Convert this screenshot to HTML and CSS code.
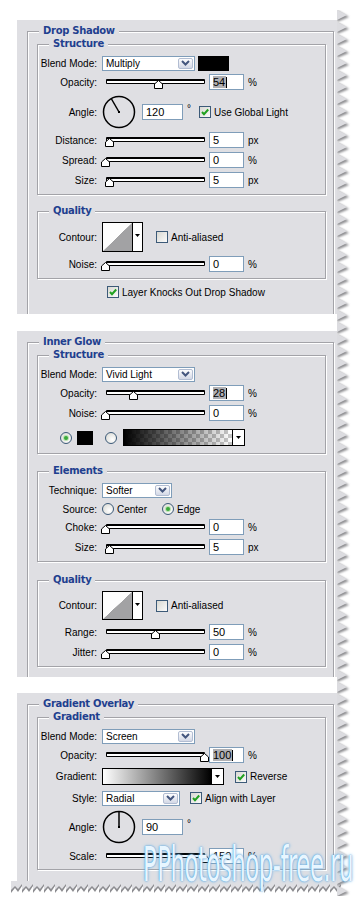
FILE: index.html
```html
<!DOCTYPE html>
<html lang="en">
<head>
    <meta charset="UTF-8">
    <meta name="viewport" content="width=device-width, initial-scale=1.0">
    <title>Layer Style</title>
    <link rel="stylesheet" href="styles.css">
</head>
<body>
<div class="sheet">
    <div class="stack">

        <!-- Drop Shadow -->
        <section class="panel">
            <div class="group outer">
                <div class="group-title">Drop Shadow</div>
                <div class="group">
                    <div class="group-title">Structure</div>
                    <div class="row">
                        <span class="lbl">Blend Mode:</span>
                        <div class="select w93"><span>Multiply</span><span class="drop"><svg width="9" height="6" viewBox="0 0 9 6"><path d="M1 1l3.5 3.5L8 1"/></svg></span></div>
                        <span class="swatch"></span>
                    </div>
                    <div class="row m3">
                        <span class="lbl">Opacity:</span>
                        <div class="slider"><svg class="thumb" style="left:54%" viewBox="0 0 9 9"><path d="M4.5 .5 8.5 4v4.5h-8V4z"/></svg></div>
                        <span class="num"><b class="sel">54</b><i class="caret"></i></span>
                        <span class="unit">%</span>
                    </div>
                    <div class="row dialrow m6">
                        <span class="lbl">Angle:</span>
                        <svg class="dial" width="34" height="34" viewBox="0 0 34 34"><circle cx="17" cy="17" r="15.5"/><path d="M17 17 9.5 4"/><rect x="16" y="16" width="2" height="2"/></svg>
                        <span class="num wide">120</span>
                        <span class="unit deg">°</span>
                        <span class="check on ml8"><svg viewBox="0 0 10 10"><path d="M2 5l2 2.2L8.2 2.5"/></svg></span>
                        <span class="txt">Use Global Light</span>
                    </div>
                    <div class="row">
                        <span class="lbl">Distance:</span>
                        <div class="slider"><svg class="thumb" style="left:4%" viewBox="0 0 9 9"><path d="M4.5 .5 8.5 4v4.5h-8V4z"/></svg></div>
                        <span class="num">5</span>
                        <span class="unit">px</span>
                    </div>
                    <div class="row">
                        <span class="lbl">Spread:</span>
                        <div class="slider"><svg class="thumb" style="left:0%" viewBox="0 0 9 9"><path d="M4.5 .5 8.5 4v4.5h-8V4z"/></svg></div>
                        <span class="num">0</span>
                        <span class="unit">%</span>
                    </div>
                    <div class="row">
                        <span class="lbl">Size:</span>
                        <div class="slider"><svg class="thumb" style="left:4%" viewBox="0 0 9 9"><path d="M4.5 .5 8.5 4v4.5h-8V4z"/></svg></div>
                        <span class="num">5</span>
                        <span class="unit">px</span>
                    </div>
                </div>

                <div class="group">
                    <div class="group-title">Quality</div>
                    <div class="row tall">
                        <span class="lbl">Contour:</span>
                        <div class="contour"><span class="curve"></span><span class="cdrop"><svg width="5" height="3" viewBox="0 0 5 3"><path d="M0 0h5L2.5 3z"/></svg></span></div>
                        <span class="check ml13"></span>
                        <span class="txt">Anti-aliased</span>
                    </div>
                    <div class="row">
                        <span class="lbl">Noise:</span>
                        <div class="slider"><svg class="thumb" style="left:0%" viewBox="0 0 9 9"><path d="M4.5 .5 8.5 4v4.5h-8V4z"/></svg></div>
                        <span class="num">0</span>
                        <span class="unit">%</span>
                    </div>
                </div>

                <div class="row knock">
                    <span class="check on"><svg viewBox="0 0 10 10"><path d="M2 5l2 2.2L8.2 2.5"/></svg></span>
                    <span class="txt">Layer Knocks Out Drop Shadow</span>
                </div>
            </div>
        </section>

        <!-- Inner Glow -->
        <section class="panel gap17">
            <div class="group outer end10">
                <div class="group-title">Inner Glow</div>
                <div class="group pb7">
                    <div class="group-title">Structure</div>
                    <div class="row">
                        <span class="lbl">Blend Mode:</span>
                        <div class="select w93"><span>Vivid Light</span><span class="drop"><svg width="9" height="6" viewBox="0 0 9 6"><path d="M1 1l3.5 3.5L8 1"/></svg></span></div>
                    </div>
                    <div class="row m3">
                        <span class="lbl">Opacity:</span>
                        <div class="slider"><svg class="thumb" style="left:28%" viewBox="0 0 9 9"><path d="M4.5 .5 8.5 4v4.5h-8V4z"/></svg></div>
                        <span class="num"><b class="sel">28</b><i class="caret"></i></span>
                        <span class="unit">%</span>
                    </div>
                    <div class="row">
                        <span class="lbl">Noise:</span>
                        <div class="slider"><svg class="thumb" style="left:0%" viewBox="0 0 9 9"><path d="M4.5 .5 8.5 4v4.5h-8V4z"/></svg></div>
                        <span class="num">0</span>
                        <span class="unit">%</span>
                    </div>
                    <div class="row swatches">
                        <span class="radio on"></span>
                        <span class="swatch small"></span>
                        <span class="radio ml12"></span>
                        <div class="grad glow"><span class="fill"></span><span class="gdrop"><svg width="5" height="3" viewBox="0 0 5 3"><path d="M0 0h5L2.5 3z"/></svg></span></div>
                    </div>
                </div>

                <div class="group gap17">
                    <div class="group-title">Elements</div>
                    <div class="row">
                        <span class="lbl">Technique:</span>
                        <div class="select w70"><span>Softer</span><span class="drop"><svg width="9" height="6" viewBox="0 0 9 6"><path d="M1 1l3.5 3.5L8 1"/></svg></span></div>
                    </div>
                    <div class="row m3">
                        <span class="lbl">Source:</span>
                        <span class="radio"></span>
                        <span class="txt opt">Center</span>
                        <span class="radio on"></span>
                        <span class="txt">Edge</span>
                    </div>
                    <div class="row m2">
                        <span class="lbl">Choke:</span>
                        <div class="slider"><svg class="thumb" style="left:0%" viewBox="0 0 9 9"><path d="M4.5 .5 8.5 4v4.5h-8V4z"/></svg></div>
                        <span class="num">0</span>
                        <span class="unit">%</span>
                    </div>
                    <div class="row">
                        <span class="lbl">Size:</span>
                        <div class="slider"><svg class="thumb" style="left:4%" viewBox="0 0 9 9"><path d="M4.5 .5 8.5 4v4.5h-8V4z"/></svg></div>
                        <span class="num">5</span>
                        <span class="unit">px</span>
                    </div>
                </div>

                <div class="group gap18">
                    <div class="group-title">Quality</div>
                    <div class="row tall t29">
                        <span class="lbl">Contour:</span>
                        <div class="contour"><span class="curve"></span><span class="cdrop"><svg width="5" height="3" viewBox="0 0 5 3"><path d="M0 0h5L2.5 3z"/></svg></span></div>
                        <span class="check ml13"></span>
                        <span class="txt">Anti-aliased</span>
                    </div>
                    <div class="row">
                        <span class="lbl">Range:</span>
                        <div class="slider"><svg class="thumb" style="left:50%" viewBox="0 0 9 9"><path d="M4.5 .5 8.5 4v4.5h-8V4z"/></svg></div>
                        <span class="num">50</span>
                        <span class="unit">%</span>
                    </div>
                    <div class="row">
                        <span class="lbl">Jitter:</span>
                        <div class="slider"><svg class="thumb" style="left:0%" viewBox="0 0 9 9"><path d="M4.5 .5 8.5 4v4.5h-8V4z"/></svg></div>
                        <span class="num">0</span>
                        <span class="unit">%</span>
                    </div>
                </div>
            </div>
        </section>

        <!-- Gradient Overlay -->
        <section class="panel gap16">
            <div class="group outer end11">
                <div class="group-title">Gradient Overlay</div>
                <div class="group last">
                    <div class="group-title">Gradient</div>
                    <div class="row">
                        <span class="lbl">Blend Mode:</span>
                        <div class="select w93"><span>Screen</span><span class="drop"><svg width="9" height="6" viewBox="0 0 9 6"><path d="M1 1l3.5 3.5L8 1"/></svg></span></div>
                    </div>
                    <div class="row m3">
                        <span class="lbl">Opacity:</span>
                        <div class="slider"><svg class="thumb" style="left:100%" viewBox="0 0 9 9"><path d="M4.5 .5 8.5 4v4.5h-8V4z"/></svg></div>
                        <span class="num"><b class="sel">100</b><i class="caret"></i></span>
                        <span class="unit">%</span>
                    </div>
                    <div class="row m5 h17">
                        <span class="lbl">Gradient:</span>
                        <div class="grad overlay"><span class="fill"></span><span class="gdrop"><svg width="5" height="3" viewBox="0 0 5 3"><path d="M0 0h5L2.5 3z"/></svg></span></div>
                        <span class="check on ml11"><svg viewBox="0 0 10 10"><path d="M2 5l2 2.2L8.2 2.5"/></svg></span>
                        <span class="txt">Reverse</span>
                    </div>
                    <div class="row m5">
                        <span class="lbl">Style:</span>
                        <div class="select w78"><span>Radial</span><span class="drop"><svg width="9" height="6" viewBox="0 0 9 6"><path d="M1 1l3.5 3.5L8 1"/></svg></span></div>
                        <span class="check on ml10"><svg viewBox="0 0 10 10"><path d="M2 5l2 2.2L8.2 2.5"/></svg></span>
                        <span class="txt">Align with Layer</span>
                    </div>
                    <div class="row dialrow m5">
                        <span class="lbl">Angle:</span>
                        <svg class="dial" width="34" height="34" viewBox="0 0 34 34"><circle cx="17" cy="17" r="15.5"/><path d="M17 17V2"/><rect x="16" y="16" width="2" height="2"/></svg>
                        <span class="num wide">90</span>
                        <span class="unit deg">°</span>
                    </div>
                    <div class="row m5">
                        <span class="lbl">Scale:</span>
                        <div class="slider"><svg class="thumb" style="left:100%" viewBox="0 0 9 9"><path d="M4.5 .5 8.5 4v4.5h-8V4z"/></svg></div>
                        <span class="num">150</span>
                        <span class="unit">%</span>
                    </div>
                </div>
            </div>
        </section>

        <!-- torn bottom edge -->
        <svg class="tear-bottom" width="330" height="14" viewBox="0 0 330 14">
            <defs>
                <filter id="blurB"><feGaussianBlur stdDeviation="0.7"/></filter>
                <pattern id="sawB" width="11" height="14" patternUnits="userSpaceOnUse">
                    <path d="M0 0h11v5l-4 6-3-4-4 5z" fill="#8c8c90" filter="url(#blurB)"/>
                    <path d="M0 0h11v3l-4 5-3-3-4 4z" fill="#dfdfe3"/>
                </pattern>
            </defs>
            <rect width="330" height="14" fill="url(#sawB)"/>
        </svg>
    </div>

    <!-- torn right edge -->
    <svg class="tear" width="16" height="886" viewBox="0 0 16 886">
        <defs>
            <filter id="blurR"><feGaussianBlur stdDeviation="0.8"/></filter>
            <pattern id="sawR" width="16" height="12" patternUnits="userSpaceOnUse">
                <path d="M0 0 12 7 0 12z" fill="#8c8c90" filter="url(#blurR)"/>
                <path d="M0 0 10 5 0 10z" fill="#dcdce0"/>
            </pattern>
        </defs>
        <rect width="16" height="886" fill="url(#sawR)"/>
    </svg>

    <div class="mark"><span class="logo">P</span>Photoshop-free.ru</div>
</div>
</body>
</html>
```

FILE: styles.css
```css
body {
    margin: 0;
    background: #fff;
    font-family: "Liberation Sans", Arial, sans-serif;
    font-size: 10px;
    color: #000;
}
.sheet {
    position: relative;
    display: flex;
    align-items: flex-start;
    padding-top: 10px;
    overflow: hidden;
}
.stack {
    width: 320px;
    margin: 10px 0 0 17px;
    flex: none;
}
.tear {
    flex: none;
    display: block;
}
.tear-bottom {
    display: block;
    margin-left: -6px;
}

/* panels */
.panel {
    background: #dfdfe3;
    padding: 11px 3px 0 10px;
    overflow: hidden;
}
.gap17 { margin-top: 17px; }
.gap16 { margin-top: 16px; }

/* group boxes */
.group {
    padding: 0 0 6px 0;
    border: 1px solid #a3a3a8;
    box-shadow: inset 1px 1px 0 #fff, 1px 1px 0 #fff;
}
.group-title {
    width: max-content;
    margin: -7px 0 5px 11px;
    padding: 0 4px;
    font: bold 10px/12px "DejaVu Sans", sans-serif;
    letter-spacing: -0.3px;
    color: #1f3f8f;
    background: #dfdfe3;
}
.group-title + .group { margin-top: 7px; }
.group + .group { margin-top: 16px; }
.group + .group.gap17 { margin-top: 17px; }
.group + .group.gap18 { margin-top: 18px; }
.group.pb7 { padding-bottom: 7px; }
.group.last { padding-bottom: 5px; }
.outer {
    border-bottom: none;
    padding: 0 7px 14px 9px;
}
.outer > .group-title { margin-left: 2px; }
.outer.end10 { padding-bottom: 10px; }
.outer.end11 { padding-bottom: 11px; }

/* rows */
.row {
    display: flex;
    align-items: center;
    height: 16px;
    margin-top: 4px;
    white-space: nowrap;
}
.row.m2 { margin-top: 2px; }
.row.m3 { margin-top: 3px; }
.row.m5 { margin-top: 5px; }
.row.m6 { margin-top: 6px; }
.row.h17 { height: 17px; }
.row.tall { height: 30px; }
.row.t29 { height: 29px; }
.row.dialrow { height: 32px; }
.lbl {
    width: 59px;
    margin-right: 5px;
    text-align: right;
    flex: none;
}
.txt { margin-left: 3px; }
.knock {
    margin-top: 5px;
    padding-left: 70px;
}

/* dropdowns */
.select {
    display: flex;
    align-items: center;
    justify-content: space-between;
    height: 15px;
    box-sizing: border-box;
    border: 1px solid #7f9db9;
    background: #fff;
    padding: 0 1px 0 3px;
    flex: none;
}
.w93 { width: 93px; }
.w78 { width: 78px; }
.w70 { width: 70px; }
.drop {
    display: flex;
    align-items: center;
    justify-content: center;
    width: 15px;
    height: 11px;
    box-sizing: border-box;
    border: 1px solid #b2bdd2;
    border-radius: 2px;
    background: linear-gradient(#fdfdfe, #d3d8e6);
}
.drop svg {
    fill: none;
    stroke: #44567e;
    stroke-width: 2;
}
.swatch {
    width: 31px;
    height: 15px;
    margin-left: 3px;
    background: #000;
    flex: none;
}
.swatch.small {
    width: 16px;
    height: 14px;
    margin-left: 5px;
}

/* sliders */
.slider {
    position: relative;
    width: 99px;
    height: 16px;
    margin: 0 4px;
    flex: none;
}
.slider::before {
    content: "";
    position: absolute;
    left: 0;
    right: 0;
    top: 5px;
    height: 2px;
    border: 1px solid #000;
    border-top-width: 2px;
    border-radius: 1px;
    background: #fff;
}
.thumb {
    position: absolute;
    top: 6px;
    width: 9px;
    height: 9px;
    margin-left: -5px;
    fill: #fff;
    stroke: #000;
    stroke-width: 1;
}

/* number fields */
.num {
    display: flex;
    align-items: center;
    width: 35px;
    height: 16px;
    box-sizing: border-box;
    border: 1px solid #7f9db9;
    background: #fff;
    padding: 0 3px;
    font-size: 11px;
    flex: none;
}
.num.wide {
    width: 41px;
    margin-left: 6px;
}
.sel {
    font-weight: normal;
    background: #b0b0b3;
    padding-right: 1px;
}
.caret {
    width: 1px;
    height: 11px;
    background: #000;
}
.unit { margin-left: 4px; }
.unit.deg { align-self: flex-start; margin-top: 7px; }

/* angle dial */
.dial {
    flex: none;
    fill: none;
    stroke: #000;
    stroke-width: 1.5;
}
.dial rect {
    fill: #000;
    stroke: none;
}

/* checkboxes and radios */
.check {
    display: inline-flex;
    width: 12px;
    height: 12px;
    box-sizing: border-box;
    border: 1px solid #3c5a78;
    background: linear-gradient(135deg, #d8d8d2, #fbfbfb);
    flex: none;
}
.check svg {
    width: 10px;
    height: 10px;
    fill: none;
    stroke: #21a121;
    stroke-width: 2;
}
.ml8 { margin-left: 8px; }
.ml10 { margin-left: 10px; }
.ml11 { margin-left: 11px; }
.ml12 { margin-left: 12px; }
.ml13 { margin-left: 13px; }
.radio {
    display: inline-flex;
    align-items: center;
    justify-content: center;
    width: 12px;
    height: 12px;
    box-sizing: border-box;
    border: 1px solid #3c5a78;
    border-radius: 50%;
    background: radial-gradient(circle at 65% 65%, #fff, #d6d6d0);
    flex: none;
}
.radio.on::after {
    content: "";
    width: 4px;
    height: 4px;
    border-radius: 50%;
    background: #3aa83a;
    box-shadow: 0 0 0 1px #b9e3b0;
}
.opt { margin-right: 15px; }
.swatches {
    height: 17px;
    margin-top: 8px;
    padding-left: 22px;
}

/* contour picker */
.contour {
    display: flex;
    width: 41px;
    height: 100%;
    box-sizing: border-box;
    border: 1px solid #000;
    background: #fff;
    flex: none;
}
.curve {
    flex: 1;
    background: linear-gradient(to bottom right, #fdfdfd 49.5%, #a2a2a4 50.5%);
}
.cdrop {
    display: flex;
    justify-content: center;
    width: 10px;
    padding-top: 11px;
    box-sizing: border-box;
    border-left: 1px solid #000;
}

/* gradient pickers */
.grad {
    display: flex;
    height: 17px;
    box-sizing: border-box;
    border: 1px solid #000;
    background: #fff;
    flex: none;
}
.grad .fill { flex: 1; }
.gdrop {
    display: flex;
    align-items: center;
    justify-content: center;
    width: 11px;
    border-left: 1px solid #000;
}
.glow {
    width: 122px;
    margin-left: 6px;
}
.glow .fill {
    background:
        linear-gradient(to right, #000, rgba(0, 0, 0, 0)),
        repeating-conic-gradient(#c8c8c8 0 25%, #fff 0 50%) 0 0 / 8px 8px;
}
.overlay { width: 122px; }
.overlay .fill {
    background: linear-gradient(to right, #fff, #000);
}

/* watermark */
.mark {
    position: absolute;
    left: 143px;
    top: 840px;
    font: 48px/1 "Liberation Sans Narrow", "DejaVu Sans Condensed", sans-serif;
    letter-spacing: -1px;
    color: #e8f6ff;
    text-shadow: 0 0 2px #3b8fd3, 0 0 5px #7cc0ee;
    transform: scaleX(0.53);
    transform-origin: left top;
    white-space: nowrap;
}
.logo { margin-right: 2px; }
```
